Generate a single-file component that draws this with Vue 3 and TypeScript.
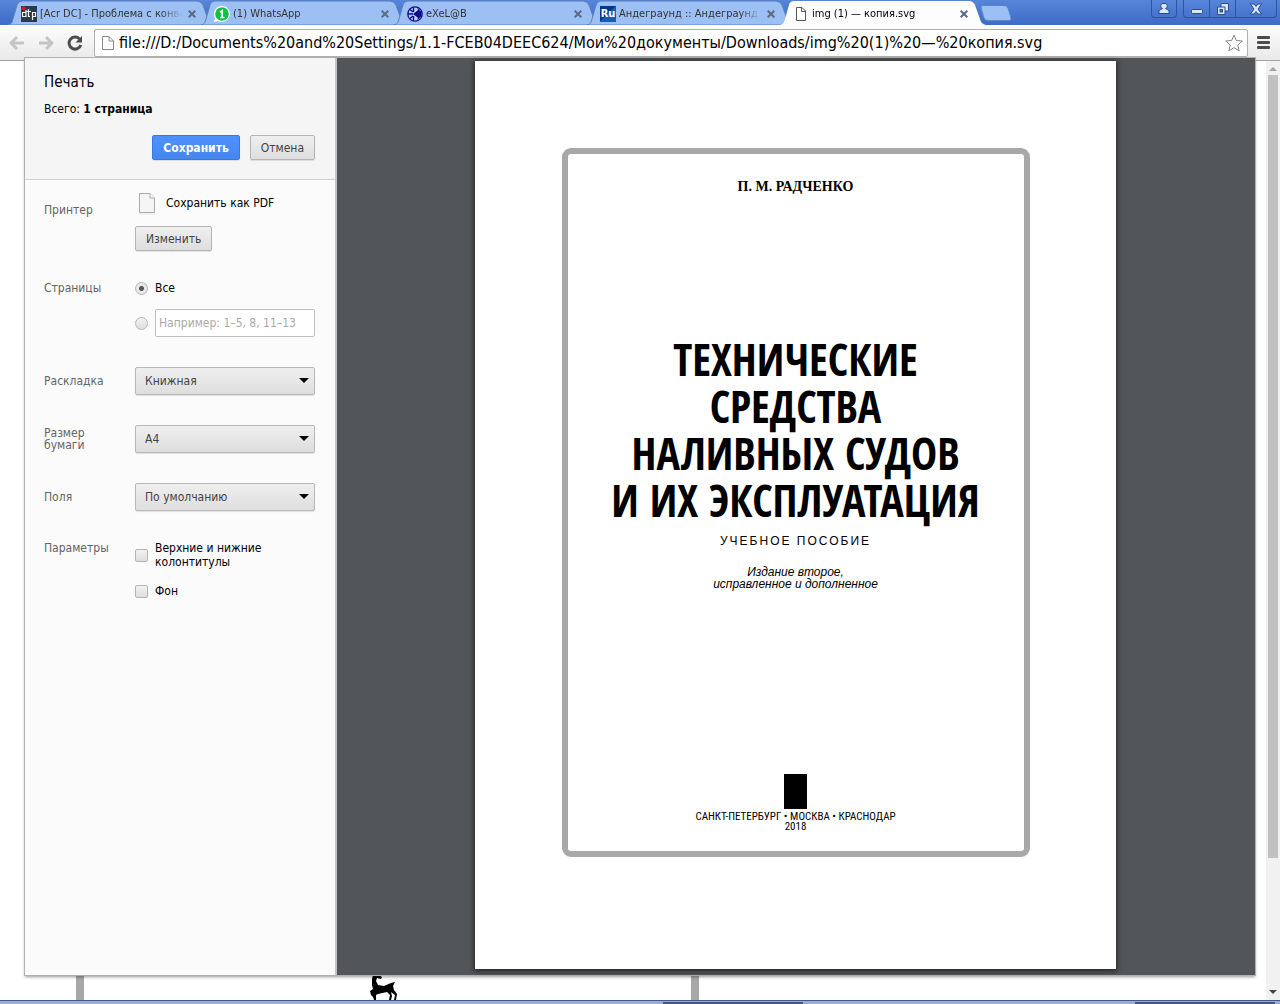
<script setup lang="ts">
import { ref } from 'vue'

interface Tab {
  title: string
  icon: 'dtp' | 'whatsapp' | 'exelab' | 'ru' | 'file'
  active?: boolean
}

const tabs: Tab[] = [
  { title: '[Acr DC] - Проблема с конве', icon: 'dtp' },
  { title: '(1) WhatsApp', icon: 'whatsapp' },
  { title: 'eXeL@B', icon: 'exelab' },
  { title: 'Андеграунд :: Андеграунд', icon: 'ru' },
  { title: 'img (1) — копия.svg', icon: 'file', active: true },
]

const address = ref('file:///D:/Documents%20and%20Settings/1.1-FCEB04DEEC624/Мои%20документы/Downloads/img%20(1)%20—%20копия.svg')
const pageMode = ref('all')
const pageRange = ref('')
const titleLines = ['ТЕХНИЧЕСКИЕ', 'СРЕДСТВА', 'НАЛИВНЫХ СУДОВ', 'И ИХ ЭКСПЛУАТАЦИЯ']
</script>

<template>
  <div class="browser">
    <header class="titlebar">
      <nav class="tabs">
        <div v-for="tab in tabs" :key="tab.title" class="tab" :class="{ active: tab.active }">
          <svg class="tab-shape" viewBox="0 0 206 25" aria-hidden="true">
            <path d="M0 25C4 24 4 22 5 19L9 5Q10 1 14 1H189Q193 1 195 5L200 19Q201 24 206 25Z" />
          </svg>
          <svg v-if="tab.icon === 'dtp'" class="favicon" viewBox="0 0 16 16">
            <rect width="16" height="16" fill="#2a3a4a" />
            <path d="M5 4V10.500H1.500V6.500H5M7.500 3V10.500H9M5.500 5.500H10M11.500 14V6.500H14.500V10.500H12" fill="none" stroke="#f4f4f4" stroke-width="1.200" />
            <circle cx="2.500" cy="2.500" r="2" fill="#e01818" />
          </svg>
          <svg v-else-if="tab.icon === 'whatsapp'" class="favicon" viewBox="0 0 16 16">
            <path d="M8 0a8 8 0 1 1-4 15L0 16 1 12A8 8 0 0 1 8 0Z" fill="#fff" />
            <circle cx="8" cy="8" r="6.800" fill="#0cc243" />
            <path d="M6 6.200 8.200 4.700V11.500M6 11.500H10.500" fill="none" stroke="#fff" stroke-width="1.700" />
          </svg>
          <svg v-else-if="tab.icon === 'exelab'" class="favicon" viewBox="0 0 16 16">
            <circle cx="8" cy="8" r="7.200" fill="#b9d0f4" stroke="#0a0a8c" stroke-width="1.300" />
            <path d="M6.500 1V6M6.500 10V15M1 8H6M3 3.500 6 6M3 12.500 6 10" fill="none" stroke="#0a0a8c" stroke-width="1.400" />
            <path d="M12.500 3V13L6 8ZM10 1.500 14.500 6V10L10 14.500 12.500 8Z" fill="#0a0a8c" />
          </svg>
          <span v-else-if="tab.icon === 'ru'" class="favicon ru">Ru</span>
          <svg v-else class="favicon" viewBox="0 0 16 16">
            <path d="M3.500 1.500H9L12.500 5V14.500H3.500ZM8.500 1.500V5.500H12.500" fill="#fff" stroke="#555" />
          </svg>
          <span class="tab-title">{{ tab.title }}</span>
          <button class="tab-close" aria-label="Закрыть вкладку">
            <svg viewBox="0 0 8 8"><path d="M.700.700 7.300 7.300M7.300.700.700 7.300" /></svg>
          </button>
        </div>
        <button class="new-tab" aria-label="Новая вкладка">
          <svg viewBox="0 0 32 16"><path d="M3 .500H24Q27 .500 28 3L31 13Q31.500 15.500 29 15.500H8Q5 15.500 4 13L1 3Q.500.500 3 .500Z" /></svg>
        </button>
      </nav>
      <div class="window-controls">
        <button class="user" aria-label="Пользователь">
          <svg viewBox="0 0 12 12"><path d="M6 .500A2.500 2.500 0 0 1 7.500 5.500L11 7.500V10.500H1V7.500L4.500 5.500A2.500 2.500 0 0 1 6 .500Z" /></svg>
        </button>
        <div class="window-group">
          <button aria-label="Свернуть"><svg viewBox="0 0 12 12"><rect x=".500" y="6.500" width="11" height="4" rx="1" /></svg></button>
          <button aria-label="Восстановить">
            <svg viewBox="0 0 12 12"><path d="M4 .500H11.500V8H4Z" /><path d="M.500 4H8V11.500H.500Z" /><rect x="3" y="6.500" width="2.500" height="2.500" class="hole" /></svg>
          </button>
          <button class="close" aria-label="Закрыть">
            <svg viewBox="0 0 12 12"><path d="M.500 1H4L6 3.500 8 1H11.500L8 6 11.500 11H8L6 8.500 4 11H.500L4 6Z" /></svg>
          </button>
        </div>
      </div>
    </header>

    <div class="toolbar">
      <button class="nav" aria-label="Назад"><svg viewBox="0 0 16 16"><path d="M15 8H2M8 2 2 8 8 14" /></svg></button>
      <button class="nav" aria-label="Вперёд"><svg viewBox="0 0 16 16"><path d="M1 8H14M8 2 14 8 8 14" /></svg></button>
      <button class="nav reload" aria-label="Обновить">
        <svg viewBox="0 0 16 16"><path d="M12.500 4A6 6 0 1 0 13.800 10" /><path d="M15 1V7.500H8.500Z" class="tip" /></svg>
      </button>
      <div class="omnibox">
        <svg class="doc" viewBox="0 0 12 16"><path d="M.500 1.500H7L11.500 6V14.500H.500ZM7 1.500V6H11.500" /></svg>
        <input v-model="address" type="text" aria-label="Адрес" />
        <button class="star" aria-label="Добавить в закладки">
          <svg viewBox="0 0 18 18"><path d="M9 1 11.300 6.500 17.300 7 12.700 11 14.200 16.800 9 13.600 3.800 16.800 5.300 11 .700 7 6.700 6.500Z" /></svg>
        </button>
      </div>
      <button class="menu" aria-label="Меню"><span></span><span></span><span></span></button>
    </div>

    <main class="viewport">
      <div class="backdrop" aria-hidden="true">
        <svg class="deer" viewBox="0 0 28 25">
          <path d="M3 0H8L12 2 11 4 7 3 6 6 8 10 14 11 21 8 25 7 23 11 24 15 27 19 26 25H24L25 20 21 17 22 21 21 25H19L20 20 17 17 8 19 6 20 6 25H4L3 22 1 20 0 16 3 14 2 10 2 4Z" />
        </svg>
      </div>

      <section class="dialog" aria-label="Печать">
        <form class="sidebar" @submit.prevent>
          <div class="summary">
            <h1>Печать</h1>
            <p>Всего: <b>1 страница</b></p>
            <div class="actions">
              <button class="btn primary">Сохранить</button>
              <button class="btn" type="button">Отмена</button>
            </div>
          </div>
          <div class="settings">
            <div class="row printer">
              <span class="label">Принтер</span>
              <div class="control">
                <div class="destination">
                  <svg viewBox="0 0 18 23">
                    <path d="M1.500 1.500H12L16.500 6V20.500H1.500Z" fill="#f5f5f5" stroke="#aaa" />
                    <path d="M12 1.500V6H16.500" fill="#fff" stroke="#aaa" />
                    <path d="M1 22H17" stroke="#e6e6e6" />
                  </svg>
                  <span>Сохранить как PDF</span>
                </div>
                <button class="btn" type="button">Изменить</button>
              </div>
            </div>
            <div class="row pages">
              <span class="label">Страницы</span>
              <div class="control">
                <label class="choice"><input v-model="pageMode" type="radio" name="pages" value="all" />Все</label>
                <div class="choice range">
                  <input v-model="pageMode" type="radio" name="pages" value="range" aria-label="Диапазон страниц" />
                  <input v-model="pageRange" type="text" aria-label="Страницы" placeholder="Например: 1–5, 8, 11–13" />
                </div>
              </div>
            </div>
            <div class="row">
              <label class="label" for="layout">Раскладка</label>
              <div class="control select"><select id="layout"><option>Книжная</option><option>Альбомная</option></select></div>
            </div>
            <div class="row">
              <label class="label" for="paper">Размер бумаги</label>
              <div class="control select"><select id="paper"><option>A4</option><option>A3</option></select></div>
            </div>
            <div class="row">
              <label class="label" for="margins">Поля</label>
              <div class="control select"><select id="margins"><option>По умолчанию</option><option>Нет</option></select></div>
            </div>
            <div class="row options">
              <span class="label">Параметры</span>
              <div class="control">
                <label class="choice"><input type="checkbox" />Верхние и нижние колонтитулы</label>
                <label class="choice"><input type="checkbox" />Фон</label>
              </div>
            </div>
          </div>
        </form>

        <div class="preview">
          <article class="sheet">
            <div class="frame">
              <p class="author">П. М. РАДЧЕНКО</p>
              <h2><span v-for="line in titleLines" :key="line">{{ line }}</span></h2>
              <p class="kind">УЧЕБНОЕ ПОСОБИЕ</p>
              <p class="edition">Издание второе,<br />исправленное и дополненное</p>
              <div class="emblem"></div>
              <p class="imprint">САНКТ-ПЕТЕРБУРГ • МОСКВА • КРАСНОДАР<br />2018</p>
            </div>
          </article>
        </div>
      </section>

      <div class="scrollbar" aria-hidden="true">
        <i class="up"></i>
        <div class="track"><div class="thumb"></div></div>
        <i class="down"></i>
      </div>
    </main>
    <footer class="taskbar"><span></span><span></span></footer>
  </div>
</template>

<style>
body {
  margin: 0;
  background: #fff;
}
</style>

<style scoped>
* {
  box-sizing: border-box;
}
.browser {
  min-height: 100vh;
  display: flex;
  flex-direction: column;
  font-family: "DejaVu Sans Condensed", "Noto Sans", sans-serif;
  font-size: 12px;
  color: #000;
}
button, input, select {
  font: inherit;
  margin: 0;
}
button {
  padding: 0;
  border: 0;
  background: none;
}
h1, h2, p {
  margin: 0;
}

/* Tab strip */
.titlebar {
  display: flex;
  justify-content: space-between;
  height: 25px;
  padding: 0 3px 0 8px;
  background: linear-gradient(#5685d9, #3e6bc6);
}
.tabs {
  display: flex;
}
.tab {
  position: relative;
  display: flex;
  align-items: center;
  width: 193px;
  padding: 2px 3px 0 13px;
  font-size: 11px;
  color: #333;
}
.tab-shape {
  position: absolute;
  left: 0;
  top: 0;
  width: 206px;
  height: 25px;
  fill: #9cc0f3;
  stroke: #5b7fbc;
}
.active {
  z-index: 1;
  color: #000;
}
.active .tab-shape {
  fill: #fdfdfd;
  stroke: none;
}
.favicon {
  position: relative;
  flex: none;
  width: 16px;
  height: 16px;
}
.ru {
  background: linear-gradient(135deg, #00388c 50%, #1c5cb0 50%);
  color: #fff;
  font: bold 11px/16px "DejaVu Sans Condensed", sans-serif;
  text-align: center;
}
.tab-title {
  position: relative;
  flex: 1;
  margin: 0 4px 0 3px;
  overflow: hidden;
  white-space: nowrap;
  mask-image: linear-gradient(90deg, #000 85%, transparent);
}
.tab-close {
  position: relative;
  width: 12px;
  height: 12px;
  line-height: 0;
}
.tab-close svg {
  width: 8px;
  height: 8px;
  stroke: #5b6b85;
  stroke-width: 2;
}
.new-tab {
  margin: 5px 0 0 7px;
  height: 16px;
}
.new-tab svg {
  display: block;
  width: 32px;
  height: 16px;
  fill: #9cc0f3;
  stroke: #5b86cc;
}
.window-controls {
  display: flex;
  gap: 6px;
  height: 18px;
}
.window-controls button {
  display: grid;
  place-items: center;
  width: 26px;
  height: 17px;
  border-right: 1px solid #2f549f;
}
.window-controls svg {
  width: 12px;
  height: 12px;
  fill: #dbe6fa;
  stroke: #2b4d90;
}
.window-controls .hole {
  fill: #4876cf;
}
.window-controls .user, .window-group {
  border: 1px solid #2f549f;
  border-top: 0;
  border-radius: 0 0 4px 4px;
}
.window-controls .user {
  height: 18px;
}
.window-group {
  display: flex;
}
.window-controls .close {
  width: 40px;
  border: 0;
}

/* Toolbar */
.toolbar {
  display: flex;
  align-items: center;
  height: 36px;
  padding: 0 10px 0 9px;
  background: linear-gradient(#fdfdfd, #e9e9e9);
  border-bottom: 1px solid #a3a3a3;
}
.nav {
  width: 16px;
  height: 16px;
  margin-right: 13px;
}
.nav svg {
  display: block;
  width: 16px;
  height: 16px;
  fill: none;
  stroke: #c4c4c4;
  stroke-width: 3;
}
.nav.reload {
  margin-right: 11px;
}
.reload svg {
  stroke: #4c4c4c;
}
.reload .tip {
  fill: #4c4c4c;
  stroke: none;
}
.omnibox {
  display: flex;
  align-items: center;
  flex: 1;
  height: 28px;
  padding: 0 4px 0 7px;
  background: #fff;
  border: 1px solid #b0b0b0;
  border-radius: 2px;
}
.doc {
  width: 12px;
  height: 16px;
  fill: #fff;
  stroke: #8a8a8a;
}
.omnibox input {
  flex: 1;
  min-width: 0;
  padding: 0 5px;
  border: 0;
  outline: 0;
  background: none;
  font-size: 16px;
}
.star {
  height: 18px;
}
.star svg {
  display: block;
  width: 18px;
  height: 18px;
  fill: #fff;
  stroke: #868686;
}
.menu {
  display: grid;
  gap: 2px;
  width: 13px;
  margin-left: 9px;
}
.menu span {
  height: 3px;
  border-radius: 1px;
  background: #4c4c4c;
}

/* Page behind the dialog */
.viewport {
  position: relative;
  flex: 1;
  display: flex;
}
.backdrop {
  position: absolute;
  left: 76px;
  bottom: 0;
  width: 623px;
  height: 40px;
  border: solid #a8a8a8;
  border-width: 0 8px;
}
.deer {
  position: absolute;
  left: 286px;
  bottom: 0;
  width: 28px;
  height: 25px;
}
.scrollbar {
  position: absolute;
  top: 0;
  right: 0;
  bottom: 0;
  display: flex;
  flex-direction: column;
  align-items: center;
  width: 14px;
  padding: 6px 0;
  background: #f1f1f1;
}
.scrollbar i {
  border: 4px solid transparent;
}
.scrollbar .up {
  border-top: 0;
  border-bottom-color: #a3a3a3;
}
.scrollbar .down {
  border-bottom: 0;
  border-top-color: #444;
}
.track {
  flex: 1;
  width: 10px;
  padding: 4px 0;
}
.thumb {
  height: 86%;
  background: #c1c1c1;
}

/* Print dialog */
.dialog {
  position: relative;
  z-index: 2;
  flex: 1;
  display: flex;
  margin: -3px 25px 25px;
  background: #fbfbfb;
  box-shadow: 0 0 0 1px #b0b0b0, 0 2px 3px rgba(0, 0, 0, 0.4);
}
.sidebar {
  width: 312px;
  border-right: 2px solid #c4c4c4;
}
.summary {
  height: 122px;
  padding: 14px 20px 0 19px;
  background: #f5f5f5;
  border-bottom: 1px solid #cfcfcf;
}
h1 {
  font-size: 15px;
  line-height: 20px;
  font-weight: normal;
}
.summary p {
  margin-top: 9px;
  line-height: 16px;
}
.actions {
  display: flex;
  justify-content: flex-end;
  gap: 10px;
  margin-top: 18px;
}
.btn {
  height: 25px;
  padding: 0 10px;
  border: 1px solid #b4b4b4;
  border-radius: 2px;
  background: linear-gradient(#efefef, #dedede);
  box-shadow: 0 1px 1px rgba(0, 0, 0, 0.1);
  color: #444;
}
.primary {
  border-color: #3079ed;
  background: linear-gradient(#4d90fe, #4787ed);
  color: #fff;
  font-weight: bold;
}
.settings {
  display: grid;
  gap: 30px;
  padding: 12px 20px 20px 19px;
}
.row {
  display: flex;
  align-items: center;
}
.label {
  width: 91px;
  padding-right: 20px;
  line-height: 12px;
  color: #646464;
}
.control {
  flex: 1;
}
.printer, .pages, .options {
  align-items: flex-start;
}
.printer .label {
  padding-top: 12px;
}
.destination {
  display: flex;
  align-items: center;
  gap: 10px;
  height: 22px;
  margin: 0 0 12px 3px;
}
.destination svg {
  width: 18px;
  height: 23px;
}
.pages .label, .options .label {
  padding-right: 0;
  line-height: 14px;
}
.choice {
  display: flex;
  align-items: center;
  gap: 7px;
  line-height: 14px;
}
.range {
  margin-top: 14px;
}
.range input[type="text"] {
  flex: 1;
  min-width: 0;
  height: 28px;
  padding: 0 3px;
  border: 1px solid #bfbfbf;
  border-radius: 2px;
  background: #fff;
}
.range input::placeholder {
  color: #a9a9a9;
  opacity: 1;
}
input[type="radio"], input[type="checkbox"] {
  flex: none;
  appearance: none;
  width: 13px;
  height: 13px;
  border: 1px solid #b4b4b4;
  border-radius: 2px;
  background: linear-gradient(#f2f2f2, #dedede);
}
input[type="radio"] {
  border-radius: 50%;
}
input[type="radio"]:checked {
  background: radial-gradient(circle, #555 0 2px, #e8e8e8 3px);
}
.select {
  position: relative;
}
.select::after {
  content: "";
  position: absolute;
  right: 6px;
  top: 11px;
  border: 5px solid transparent;
  border-top-color: #000;
  border-bottom: 0;
  pointer-events: none;
}
select {
  display: block;
  appearance: none;
  width: 100%;
  height: 28px;
  padding: 0 9px;
  border: 1px solid #b8b8b8;
  border-radius: 2px;
  background: linear-gradient(#efefef, #dedede);
  box-shadow: 0 1px 1px rgba(0, 0, 0, 0.1);
  color: #444;
}
.options .control {
  display: grid;
  gap: 15px;
}

/* Preview */
.preview {
  flex: 1;
  padding: 3px 22px 6px 20px;
  background: #525659;
}
.sheet {
  display: flex;
  max-width: 641px;
  height: 100%;
  margin: 0 auto;
  padding: 87px 86px 112px 87px;
  background: #fff;
  box-shadow: 0 1px 5px 1px rgba(0, 0, 0, 0.6);
}
.frame {
  flex: 1;
  display: flex;
  flex-direction: column;
  align-items: center;
  padding: 24px 0 19px;
  border: 6px solid #a8a8a8;
  border-radius: 9px;
  font-family: "Liberation Sans", Arial, sans-serif;
  text-align: center;
  white-space: nowrap;
}
.author {
  font: bold 14px/18px "Liberation Serif", serif;
}
h2 {
  margin-top: 140px;
  font-family: "Liberation Sans Narrow", "Open Sans Condensed", "Noto Sans ExtraCondensed", "Roboto Condensed", sans-serif;
  font-size: 44px;
  line-height: 47px;
}
h2 span {
  display: block;
}
.kind {
  margin-top: 8px;
  font-size: 12px;
  line-height: 18px;
  letter-spacing: 2px;
}
.edition {
  margin-top: 16px;
  font-size: 12px;
  line-height: 12px;
  font-style: italic;
}
.emblem {
  width: 23px;
  height: 35px;
  margin-top: auto;
  background: #000;
}
.imprint {
  margin-top: 3px;
  font-family: "Roboto Condensed", Roboto, sans-serif;
  font-size: 11px;
  line-height: 10px;
}
.taskbar {
  display: flex;
  justify-content: flex-end;
  gap: 26%;
  height: 4px;
  padding: 1px 5px 0 0;
  border-top: 1px solid #41588a;
  background: #9dadd2;
}
.taskbar span {
  width: 11%;
  background: #46557c;
}
</style>
